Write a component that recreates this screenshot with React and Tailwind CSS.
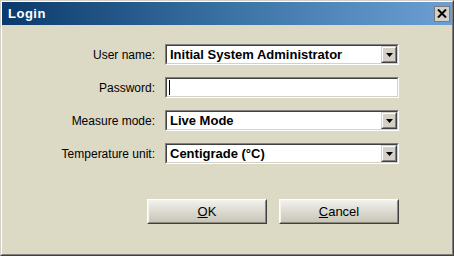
import React from 'react';

const font = { fontFamily: '"Liberation Sans", Arial, sans-serif' };

const DropArrow = () => (
  <div className="w-[16px] h-full bg-[#d4d0c8] border border-t-[#d4d0c8] border-l-[#d4d0c8] border-r-[#404040] border-b-[#404040] shrink-0">
    <div className="w-full h-full border border-t-white border-l-white border-r-[#808080] border-b-[#808080] flex items-center justify-center">
      <svg width="7" height="4" viewBox="0 0 7 4">
        <path d="M0 0h7L3.5 4z" fill="#000" />
      </svg>
    </div>
  </div>
);

const Field = ({ children }) => (
  <div className="h-[21px] border border-t-[#808080] border-l-[#808080] border-r-white border-b-white">
    <div className="h-full bg-white border border-t-[#404040] border-l-[#404040] border-r-[#d4d0c8] border-b-[#d4d0c8] flex items-stretch">
      {children}
    </div>
  </div>
);

const Combo = ({ value }) => (
  <Field>
    <div className="flex-1 pl-[3px] flex items-center text-[13px] font-bold text-black leading-none">{value}</div>
    <DropArrow />
  </Field>
);

const Label = ({ children }) => (
  <div className="h-[21px] flex items-center justify-end text-[12px] text-black">{children}</div>
);

const Button = ({ children }) => (
  <button className="w-[120px] h-[25px] border border-t-white border-l-white border-r-[#404040] border-b-[#404040]">
    <div className="w-full h-full border border-t-[#f4f3ee] border-l-[#f4f3ee] border-r-[#8a877c] border-b-[#8a877c] bg-gradient-to-b from-[#f0efea] to-[#c9c6b8] flex items-center justify-center text-[13px] text-black">
      {children}
    </div>
  </button>
);

export default function App() {
  return (
    <div style={font} className="w-[454px] h-[256px] border border-t-[#d4d0c8] border-l-[#d4d0c8] border-r-[#404040] border-b-[#404040] bg-[#dcd9c5]">
      <div className="w-full h-full border border-t-white border-l-white border-r-[#808080] border-b-[#808080] flex flex-col">
        {/* Title bar */}
        <div className="h-[23px] shrink-0 bg-gradient-to-r from-[#0a3a6b] via-[#3a72a4] to-[#6ca0d4] flex items-center justify-between pl-[6px] pr-[2px]">
          <span className="text-white font-bold text-[13px] tracking-[0.5px]">Login</span>
          <div className="w-[16px] h-[16px] bg-[#d4d0c8] border border-[#7a7a7a] flex items-center justify-center">
            <svg width="10" height="9" viewBox="0 0 10 9">
              <path d="M1 0.5L9 8.5M9 0.5L1 8.5" stroke="#000" strokeWidth="2" />
            </svg>
          </div>
        </div>

        {/* Form */}
        <div className="pt-[19px] grid grid-cols-[153px_234px] gap-x-[10px] gap-y-[12px]">
          <Label>User name:</Label>
          <Combo value="Initial System Administrator" />
          <Label>Password:</Label>
          <Field>
            <div className="flex-1 pl-[2px] flex items-center">
              <div className="w-px h-[15px] bg-black" />
            </div>
          </Field>
          <Label>Measure mode:</Label>
          <Combo value="Live Mode" />
          <Label>Temperature unit:</Label>
          <Combo value="Centigrade (°C)" />
        </div>

        {/* Buttons */}
        <div className="mt-[35px] ml-[145px] flex gap-[12px]">
          <Button><span><span className="underline">O</span>K</span></Button>
          <Button><span><span className="underline">C</span>ancel</span></Button>
        </div>
      </div>
    </div>
  );
}
